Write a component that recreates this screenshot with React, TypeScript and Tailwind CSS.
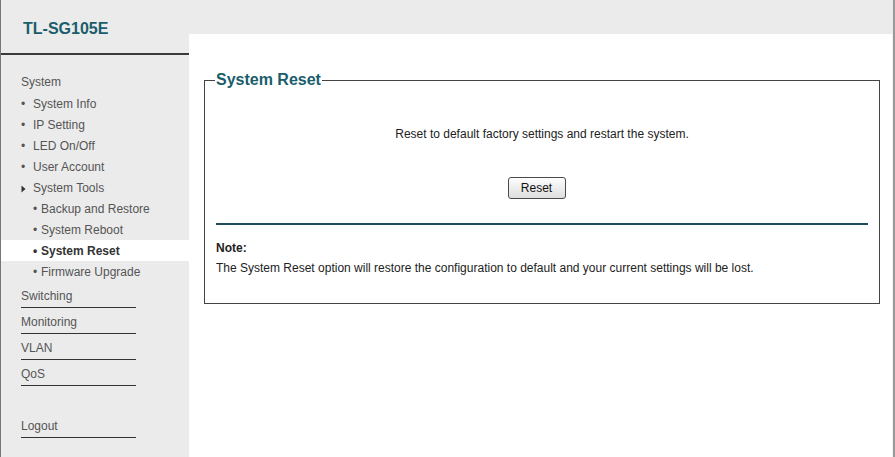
import React from "react";

const font = { fontFamily: '"Liberation Sans", Arial, sans-serif' };

function Bullet({ sub, label, active }: { sub?: boolean; label: string; active?: boolean }) {
  return (
    <div
      className={`flex h-[21px] items-center ${sub ? "pl-[32px]" : "pl-[20px]"} ${
        active ? "bg-white font-bold text-[#333]" : "text-[#555]"
      }`}
    >
      <span className={`${sub ? "w-[8px]" : "w-[12px]"} text-[12px] leading-none`}>•</span>
      <span>{label}</span>
    </div>
  );
}

function MenuBlock({ label, className = "" }: { label: string; className?: string }) {
  return (
    <div className={`ml-[20px] w-[115px] border-b border-[#333] pt-[4px] leading-[21px] text-[#555] ${className}`}>
      {label}
    </div>
  );
}

export default function App() {
  return (
    <div
      style={font}
      className="flex h-[457px] w-[895px] overflow-hidden border-l border-r-2 border-l-[#777] border-r-[#999] bg-[#ebebeb] text-[12px]"
    >
      <aside className="flex w-[188px] shrink-0 flex-col">
        <div className="flex h-[55px] items-center border-b-2 border-[#3a3a3a] pl-[22px] pt-[4px]">
          <span className="text-[16px] font-bold text-[#1a5d6c]">TL-SG105E</span>
        </div>
        <nav className="pt-[16px]">
          <div className="mb-px flex h-[21px] items-center pl-[20px] text-[#555]">System</div>
          <Bullet label="System Info" />
          <Bullet label="IP Setting" />
          <Bullet label="LED On/Off" />
          <Bullet label="User Account" />
          <div className="flex h-[21px] items-center pl-[20px] text-[#555]">
            <svg width="12" height="21" viewBox="0 0 12 21" className="shrink-0">
              <path d="M0.5 8.5 L4.5 12 L0.5 15.5 Z" fill="#333" />
            </svg>
            <span>System Tools</span>
          </div>
          <Bullet sub label="Backup and Restore" />
          <Bullet sub label="System Reboot" />
          <Bullet sub active label="System Reset" />
          <Bullet sub label="Firmware Upgrade" />
          <MenuBlock label="Switching" />
          <MenuBlock label="Monitoring" />
          <MenuBlock label="VLAN" />
          <MenuBlock label="QoS" />
          <MenuBlock label="Logout" className="mt-[26px]" />
        </nav>
      </aside>
      <div className="flex flex-1 flex-col">
        <div className="h-[34px] shrink-0" />
        <main className="flex-1 border-r border-[#f2f2f2] bg-white pl-[15px] pr-[12px] pt-[37px]">
          <fieldset className="border border-[#444] px-[11px] pb-[28px]">
            <legend className="-ml-px px-px text-[16px] font-bold leading-[18px] text-[#1a5d6c]">
              System Reset
            </legend>
            <p className="mt-[38px] text-center leading-[14px] text-[#222]">
              Reset to default factory settings and restart the system.
            </p>
            <div className="mt-[36px] flex justify-center">
              <button className="mr-[11px] h-[22px] w-[58px] rounded-[3px] border border-[#4a4a4a] bg-gradient-to-b from-[#fdfdfd] to-[#dedede] text-[12px] text-[#111]">
                Reset
              </button>
            </div>
            <div className="mt-[24px] h-[2px] bg-[#1e4d5c]" />
            <p className="mt-[16px] font-bold leading-[14px] text-[#222]">Note:</p>
            <p className="mt-[6px] leading-[14px] text-[#222]">
              The System Reset option will restore the configuration to default and your current settings will be lost.
            </p>
          </fieldset>
        </main>
      </div>
    </div>
  );
}
